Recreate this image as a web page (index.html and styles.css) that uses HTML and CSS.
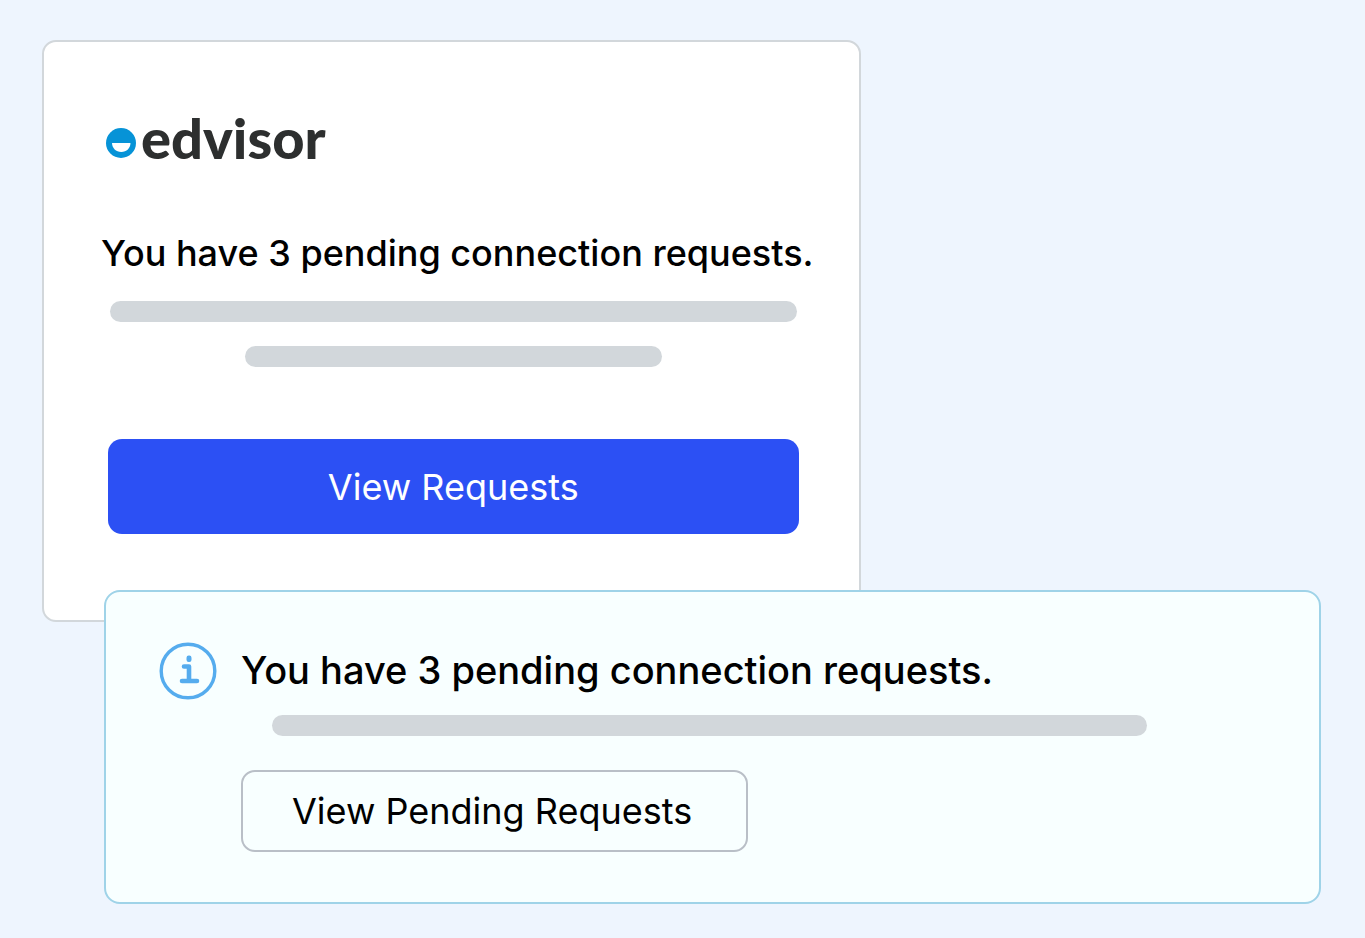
FILE: index.html
```html
<!DOCTYPE html>
<html lang="en">
<head>
    <meta charset="UTF-8">
    <meta name="viewport" content="width=device-width, initial-scale=1.0">
    <title>Edvisor - Pending Requests</title>
    <link rel="stylesheet" href="styles.css">
</head>
<body>
    <main class="page">
        <section class="card">
            <div class="logo">
                <svg class="logo-mark" viewBox="0 0 30 30" aria-hidden="true">
                    <circle cx="15" cy="15" r="15" fill="#0693d7"/>
                    <path d="M6 15h18.500c0 5-4 9-9.250 9S6 20 6 15z" fill="#fff"/>
                </svg>
                <span class="logo-text">edvisor</span>
            </div>
            <h1 class="card-title">You have 3 pending connection requests.</h1>
            <div class="bar bar-long"></div>
            <div class="bar bar-short"></div>
            <button type="button" class="btn btn-primary">View Requests</button>
        </section>

        <section class="notice">
            <svg class="info-icon" viewBox="0 0 58 58" aria-hidden="true">
                <circle cx="29" cy="29" r="26.800" fill="none" stroke="#55acee" stroke-width="3.400"/>
                <rect x="27.500" y="13.500" width="5" height="6.500" rx="2.200" fill="#55acee"/>
                <path d="M25 24.500h5v14M23 39h15" fill="none" stroke="#55acee" stroke-width="4.600" stroke-linecap="round" stroke-linejoin="round"/>
            </svg>
            <div class="notice-body">
                <h2 class="notice-title">You have 3 pending connection requests.</h2>
                <div class="bar bar-notice"></div>
                <button type="button" class="btn btn-outline">View Pending Requests</button>
            </div>
        </section>
    </main>
</body>
</html>
```

FILE: styles.css
```css
* {
    box-sizing: border-box;
}
body {
    margin: 0;
    background: #eef5fe;
    color: #000;
    font-family: Inter, "Open Sans", sans-serif;
}
.page {
    padding: 40px 44px 34px 42px;
}
.card {
    width: 64%;
    padding: 72px 60px 86px 64px;
    background: #fff;
    border: 2px solid #d2d7db;
    border-radius: 14px;
}
.logo {
    display: flex;
    align-items: center;
    gap: 5px;
    height: 48px;
    margin-left: -2px;
}
.logo-mark {
    width: 30px;
    height: 30px;
    margin-top: 9px;
}
.logo-text {
    color: #2d2f2f;
    font-family: Lato, sans-serif;
    font-size: 56px;
    font-weight: 900;
    line-height: 46px;
}
.card-title {
    margin: 67px -24px 0 -16px;
    font-size: 36px;
    font-weight: 500;
    line-height: 48px;
    text-align: center;
    white-space: nowrap;
}
.bar {
    height: 21px;
    background: #d2d7db;
    border-radius: 11px;
}
.bar-long {
    margin: 24px 2px 0;
}
.bar-short {
    width: 417px;
    max-width: 100%;
    margin: 24px auto 0;
}
.btn {
    display: block;
    font-family: inherit;
    font-size: 36px;
    font-weight: 400;
    cursor: pointer;
}
.btn-primary {
    width: 100%;
    height: 95px;
    margin-top: 72px;
    border: 0;
    border-radius: 14px;
    background: #2c50f4;
    color: #fff;
}
.notice {
    position: relative;
    display: flex;
    gap: 24px;
    margin: -32px 0 0 62px;
    padding: 50px 54px 50px 53px;
    background: #f8ffff;
    border: 2px solid #9fd3e8;
    border-radius: 16px;
}
.info-icon {
    flex: none;
    width: 58px;
    height: 58px;
}
.notice-body {
    flex: 1;
}
.notice-title {
    margin: 4px 0 0;
    font-size: 38px;
    font-weight: 500;
    line-height: 48px;
}
.bar-notice {
    margin: 21px 118px 0 31px;
}
.btn-outline {
    height: 82px;
    margin-top: 34px;
    padding: 0 54px 0 49px;
    background: transparent;
    border: 2px solid #b9bfc7;
    border-radius: 14px;
    color: #000;
}
```
